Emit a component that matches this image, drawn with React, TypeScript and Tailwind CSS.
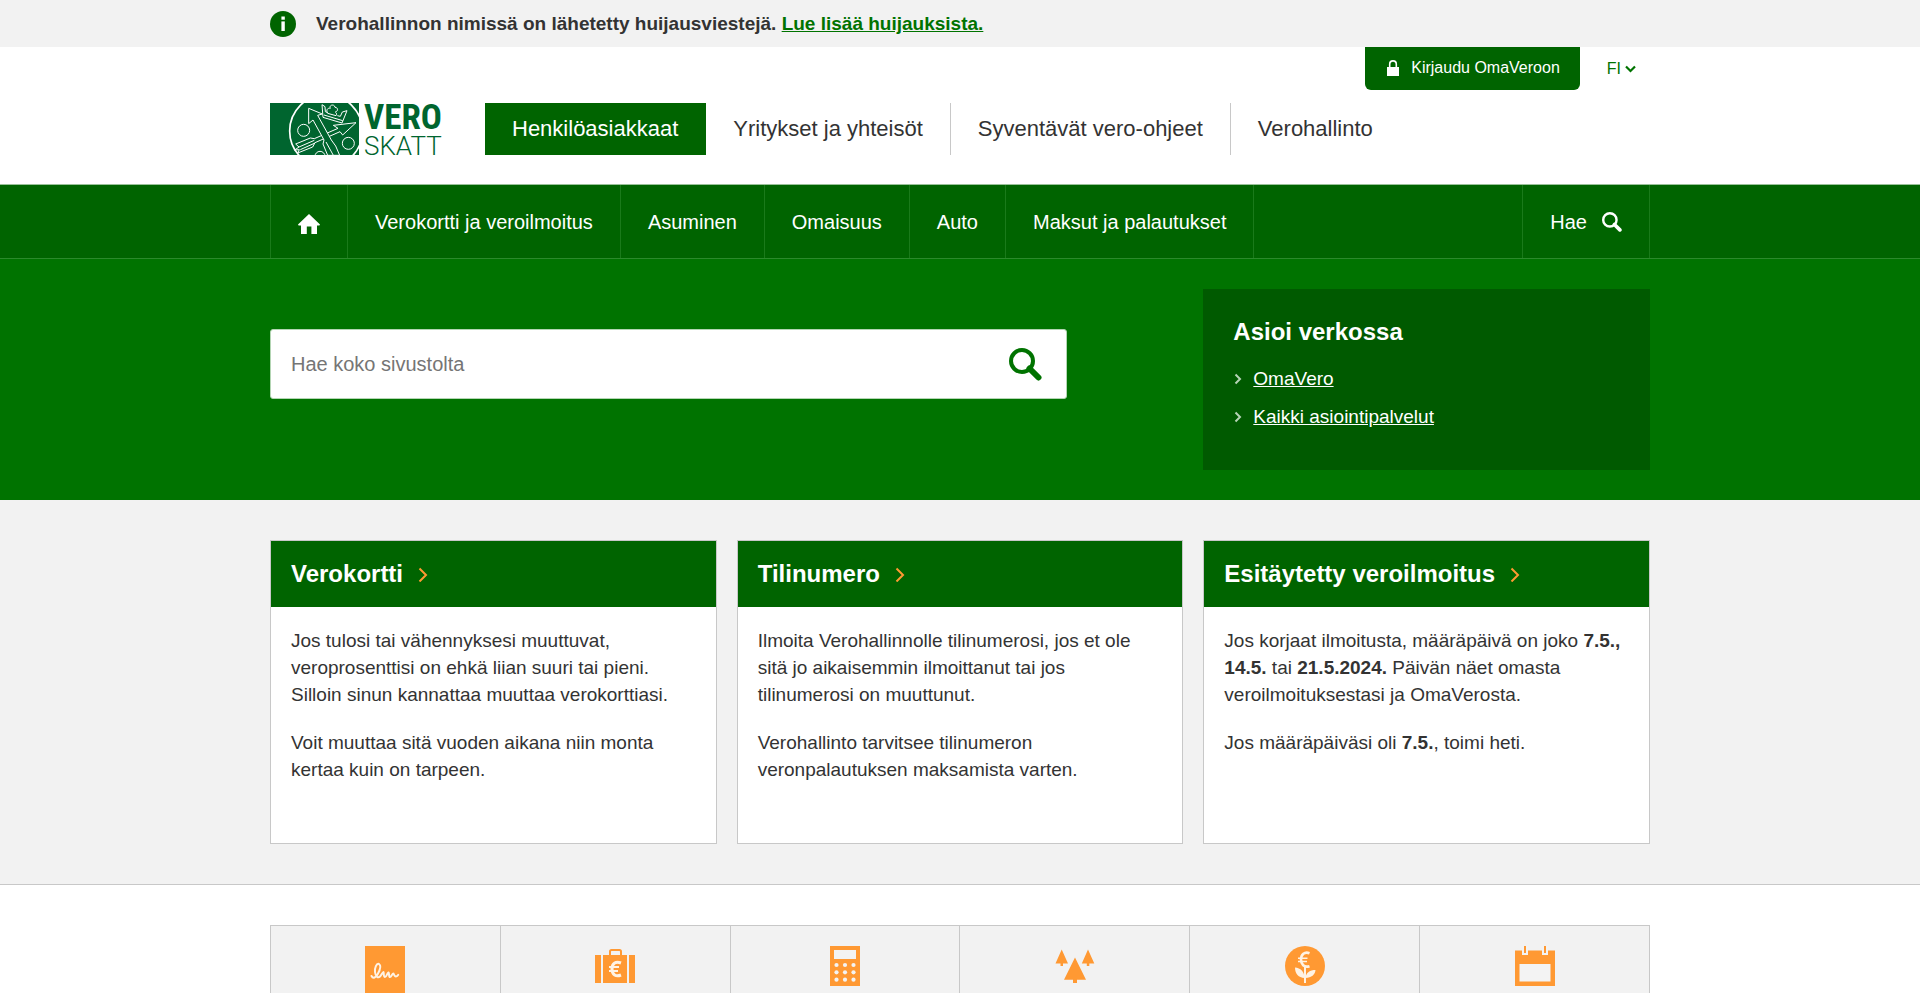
import type { ReactNode } from "react";

const mainNav = ["Henkilöasiakkaat", "Yritykset ja yhteisöt", "Syventävät vero-ohjeet", "Verohallinto"];
const subNav = ["Verokortti ja veroilmoitus", "Asuminen", "Omaisuus", "Auto", "Maksut ja palautukset"];

function Container({ children, className = "" }: { children: ReactNode; className?: string }) {
  return <div className={"mx-auto w-full max-w-[1380px] " + className}>{children}</div>;
}

function InfoIcon() {
  return (
    <svg width="26" height="26" viewBox="0 0 26 26" aria-hidden="true">
      <circle cx="13" cy="13" r="13" fill="#006400" />
      <rect x="11.400" y="5.500" width="3.400" height="3.200" fill="#fff" />
      <path d="M11.400 10.400h3.400V20h-3.400z" fill="#fff" />
    </svg>
  );
}

function LockIcon() {
  return (
    <svg width="12" height="16" viewBox="0 0 12 16" aria-hidden="true">
      <path d="M2.700 8V4.200a3.300 3.300 0 0 1 6.600 0V8" fill="none" stroke="#fff" strokeWidth="1.600" />
      <rect y="7" width="12" height="9" fill="#fff" />
    </svg>
  );
}

function SearchIcon({ size, className = "" }: { size: number; className?: string }) {
  return (
    <svg width={size} height={size} viewBox="0 0 33 33" className={className} aria-hidden="true">
      <circle cx="13" cy="13" r="11" fill="none" stroke="currentColor" strokeWidth="4" />
      <path d="M20.500 20.500l9 9" stroke="currentColor" strokeWidth="6" strokeLinecap="round" />
    </svg>
  );
}

function HomeIcon() {
  return (
    <svg width="22" height="20" viewBox="0 0 22 20" aria-hidden="true">
      <path d="M11 0L22 10.400l-.6 1H19V20h-5.600v-7.600H8.800V20H3v-8.600H.6l-.6-1z" fill="#fff" />
    </svg>
  );
}

function Logo() {
  return (
    <a href="#" aria-label="Vero Skatt" className="flex gap-[5px] text-[#00652f]">
      <svg width="89" height="52" viewBox="30 39 267 156" aria-hidden="true">
        <rect x="30" y="39" width="267" height="156" fill="#00652f" />
        <g fill="none" stroke="#fff" strokeWidth="3">
          <circle cx="198" cy="123" r="109" strokeWidth="5" />
          <circle cx="131" cy="121" r="18" />
          <circle cx="265" cy="160" r="18" />
          <circle cx="180" cy="199" r="15" />
          <path d="M186 44l3 38 57 17 15-37-14 4-6 13-9-2M186 44l9 6 1 15 7 3" />
          <path d="M203 70c-6-10 0-17 8-15-5-11 13-14 14-3 9 0 11 11 1 14 4 3 5 7 2 11z" />
          <path d="M192 75l56 17" />
          <g fill="#00652f">
            <path d="M288 98l-68 8 14 9-71 31-12-2-44 18 10 9-13 9 14-1-5 10 45-18 7-13 75-33 8 10z" />
            <path d="M117 171l46-20M121 179l44-20" />
            <path d="M146 55v46l13-11 33 60-3 12 14 34h36l-12-28-13-18-41-74 14-4z" />
            <path d="M198 156l22 40" />
          </g>
        </g>
      </svg>
      <span className="flex h-[52px] w-[76px] flex-col">
        <span className="font-['Roboto_Condensed','Liberation_Sans_Narrow','Liberation_Sans',sans-serif] text-[35px] leading-[30px] font-bold">
          VERO
        </span>
        <span className="font-[Roboto,sans-serif] text-[26px] leading-[26px] font-light">SKATT</span>
      </span>
    </a>
  );
}

function Card({ title, children }: { title: string; children: ReactNode }) {
  return (
    <article className="min-h-[304px] border border-[#c8c8c8] bg-white">
      <h2 className="bg-[#006400] px-5 py-4 text-2xl leading-[34px] font-bold text-white">
        <a href="#" className="flex items-center gap-[15px]">
          {title}
          <svg width="10" height="16" viewBox="0 0 10 16" aria-hidden="true">
            <path d="M1.500 2.500l6.500 6.500-6.500 6.500" fill="none" stroke="#f93" strokeWidth="2" />
          </svg>
        </a>
      </h2>
      <div className="flex flex-col gap-[21px] px-5 pt-5 pb-12">{children}</div>
    </article>
  );
}

const tileIcons: { name: string; icon: ReactNode }[] = [
  {
    name: "Lomakkeet",
    icon: (
      <svg width="40" height="52" viewBox="0 0 40 52" aria-hidden="true">
        <rect width="40" height="52" fill="#f93" />
        <path
          d="M6.500 30c1.500 3 4.500 1.500 6-1.500 2-3.500 4-9 1.500-10.500-2.500-1-4.500 4-4 8 .5 4.500 3 6.500 5 4.500 1.500-1.500 2-3.500 3.500-4.500.5 2.500 0 5 1.500 5s2-4 3.500-4.500c1 .5 0 4.500 1.500 4.500s2-3.500 3.500-3.500c.5 1.500 1 3 2.500 3 1 0 1.800-.8 2.200-1.600"
          fill="none"
          stroke="#fff3e4"
          strokeWidth="2"
          strokeLinecap="round"
          strokeLinejoin="round"
        />
      </svg>
    ),
  },
  {
    name: "Tulot",
    icon: (
      <svg width="40" height="40" viewBox="0 0 40 40" aria-hidden="true">
        <path d="M15 10V5.500a1.500 1.500 0 0 1 1.500-1.500h8a1.500 1.500 0 0 1 1.500 1.500V10" fill="none" stroke="#f93" strokeWidth="2" />
        <path d="M0 9h6v28H0zM8 9h24v28H8zM34 9h6v28h-6z" fill="#f93" />
        <path d="M26 17c-5-2-9 0-9 6s4 8 9 6" fill="none" stroke="#fff3e4" strokeWidth="3" />
        <path d="M14 21h10M14 25h9" stroke="#fff3e4" strokeWidth="1.800" />
      </svg>
    ),
  },
  {
    name: "Laskurit",
    icon: (
      <svg width="30" height="40" viewBox="0 0 30 40" aria-hidden="true">
        <rect width="30" height="40" fill="#f93" />
        <rect x="4" y="4" width="22" height="9" fill="#f3f3f3" />
        {[19, 26.300, 33.700].map((cy) =>
          [6.500, 15, 23.500].map((cx) => <circle key={`${cx}-${cy}`} cx={cx} cy={cy} r="2.100" fill="#f3f3f3" />),
        )}
      </svg>
    ),
  },
  {
    name: "Metsä",
    icon: (
      <svg width="40" height="40" viewBox="0 0 40 40" aria-hidden="true">
        <path
          d="M6.700 3.500L13 17.500H8V20H5.500v-2.500H.5zM33 3.500l6.300 14h-5V20h-2.500v-2.500h-5zM20 11.500l11 22.300h-9V37h-4v-3.200H9z"
          fill="#f93"
        />
      </svg>
    ),
  },
  {
    name: "Sijoitukset",
    icon: (
      <svg width="40" height="40" viewBox="0 0 40 40" aria-hidden="true">
        <circle cx="20" cy="20" r="20" fill="#f93" />
        <path d="M24.500 7.200c-5-2-8.500 1.500-8.500 6.300s3 8.500 8.500 6.700" fill="none" stroke="#fff3e4" strokeWidth="2.600" />
        <path d="M13 12.200h9.500M13 15.500h9" stroke="#fff3e4" strokeWidth="1.500" />
        <path d="M20 20v17" stroke="#fff3e4" strokeWidth="2" />
        <path d="M19.500 32c-6-.5-9.500-4-9.500-10.500 5.500.5 9.500 4 9.500 10.500zM20.500 32c6-.5 9.500-3 10-8-5.500 0-9.500 2.500-10 8z" fill="#fff3e4" />
      </svg>
    ),
  },
  {
    name: "Kalenteri",
    icon: (
      <svg width="40" height="40" viewBox="0 0 40 40" aria-hidden="true">
        <path d="M0 4.500h40V40H0z" fill="#f93" />
        <path d="M7 0h6v9H7zM27 0h6v9h-6zM4.500 18h31v17.500h-31z" fill="#f3f3f3" />
        <path d="M9 0h2v7H9zM29 0h2v7h-2z" fill="#f93" />
      </svg>
    ),
  },
];

export default function App() {
  return (
    <div className="bg-white font-['Liberation_Sans',Arial,sans-serif] text-[19px] leading-[27px] text-[#333]">
      <div className="bg-[#f2f2f2]">
        <Container className="flex items-center gap-5 py-[10px] font-bold">
          <InfoIcon />
          <p>
            Verohallinnon nimissä on lähetetty huijausviestejä.{" "}
            <a href="#" className="text-[#007300] underline">
              Lue lisää huijauksista.
            </a>
          </p>
        </Container>
      </div>

      <header>
        <Container>
          <div className="flex items-start justify-end gap-[27px] pr-[14px] text-base">
            <a
              href="#"
              className="flex items-center gap-3 rounded-b-md bg-[#006400] pr-5 pb-[2px] pl-[22px] leading-[41px] text-white"
            >
              <LockIcon />
              Kirjaudu OmaVeroon
            </a>
            <div className="flex items-center gap-1 leading-[43px] text-[#007300]">
              <select aria-label="Kieli" className="field-sizing-content appearance-none bg-transparent p-0">
                <option>FI</option>
                <option>SV</option>
                <option>EN</option>
              </select>
              <svg width="11" height="8" viewBox="0 0 11 8" aria-hidden="true">
                <path d="M1 1.500l4.500 4.500L10 1.500" fill="none" stroke="currentColor" strokeWidth="2.200" />
              </svg>
            </div>
          </div>
          <div className="flex gap-[45px] pt-[13px] pb-[29px]">
            <Logo />
            <nav className="flex text-[22px] leading-[52px]">
              {mainNav.map((item, i) => (
                <a
                  key={item}
                  href="#"
                  className={
                    i === 0
                      ? "border-r border-[#006400] bg-[#006400] px-[27px] text-white"
                      : i < 3
                        ? "border-r border-[#c8c8c8] px-[27px]"
                        : "px-[27px]"
                  }
                >
                  {item}
                </a>
              ))}
            </nav>
          </div>
        </Container>
      </header>

      <nav className="border-t border-b border-t-[#99c199] border-b-[#2b8a2b] bg-[#006400] text-xl leading-[73px] text-white">
        <Container className="flex border-x border-[#1a7a1a]">
          <a href="#" aria-label="Etusivu" className="flex items-center border-r border-[#1a7a1a] px-[27px] pt-1">
            <HomeIcon />
          </a>
          {subNav.map((item) => (
            <a key={item} href="#" className="border-r border-[#1a7a1a] px-[27px] pt-px leading-[72px]">
              {item}
            </a>
          ))}
          <button
            type="button"
            className="ml-auto flex items-center gap-[15px] border-l border-[#1a7a1a] px-[27px] pt-px leading-[72px]"
          >
            Hae
            <SearchIcon size={20} />
          </button>
        </Container>
      </nav>

      <section className="bg-[#007300] py-[30px]">
        <Container className="grid grid-cols-3 items-start gap-5">
          <form className="col-span-2 mt-10 mr-[116px] flex h-[70px] items-center rounded-[3px] border border-[#b3d5b3] bg-white px-5">
            <input
              type="search"
              aria-label="Hae koko sivustolta"
              placeholder="Hae koko sivustolta"
              className="h-full min-w-0 flex-1 text-xl outline-none placeholder:text-[#757575]"
            />
            <button type="button" aria-label="Hae" className="pr-1 text-[#007300]">
              <SearchIcon size={33} />
            </button>
          </form>
          <aside className="min-h-[181px] bg-[#005a00] px-[30px] pt-[26px] text-white">
            <h2 className="text-2xl leading-[34px] font-bold">Asioi verkossa</h2>
            <ul className="mt-4 flex flex-col gap-[11px]">
              {["OmaVero", "Kaikki asiointipalvelut"].map((item) => (
                <li key={item} className="flex items-center gap-[10px]">
                  <svg width="10" height="12" viewBox="0 0 10 12" aria-hidden="true">
                    <path d="M2.500 1.500L7 6l-4.500 4.500" fill="none" stroke="#b5d3b5" strokeWidth="2" />
                  </svg>
                  <a href="#" className="underline">
                    {item}
                  </a>
                </li>
              ))}
            </ul>
          </aside>
        </Container>
      </section>

      <section className="border-b border-[#c8c8c8] bg-[#f2f2f2] py-10">
        <Container className="grid grid-cols-3 gap-5">
          <Card title="Verokortti">
            <p>
              Jos tulosi tai vähennyksesi muuttuvat, veroprosenttisi on ehkä liian suuri tai pieni. Silloin sinun
              kannattaa muuttaa verokorttiasi.
            </p>
            <p>Voit muuttaa sitä vuoden aikana niin monta kertaa kuin on tarpeen.</p>
          </Card>
          <Card title="Tilinumero">
            <p>
              Ilmoita Verohallinnolle tilinumerosi, jos et ole sitä jo aikaisemmin ilmoittanut tai jos tilinumerosi on
              muuttunut.
            </p>
            <p>Verohallinto tarvitsee tilinumeron veronpalautuksen maksamista varten.</p>
          </Card>
          <Card title="Esitäytetty veroilmoitus">
            <p>
              Jos korjaat ilmoitusta, määräpäivä on joko <b>7.5.,</b> <b>14.5.</b> tai <b>21.5.2024.</b> Päivän näet
              omasta veroilmoituksestasi ja OmaVerosta.
            </p>
            <p>
              Jos määräpäiväsi oli <b>7.5.</b>, toimi heti.
            </p>
          </Card>
        </Container>
      </section>

      <section className="pt-10">
        <Container className="grid grid-cols-6 border-t border-l border-[#c8c8c8] bg-[#f2f2f2]">
          {tileIcons.map(({ name, icon }) => (
            <a
              key={name}
              href="#"
              aria-label={name}
              className="flex items-start justify-center border-r border-[#c8c8c8] pt-5"
            >
              {icon}
            </a>
          ))}
        </Container>
      </section>
    </div>
  );
}
